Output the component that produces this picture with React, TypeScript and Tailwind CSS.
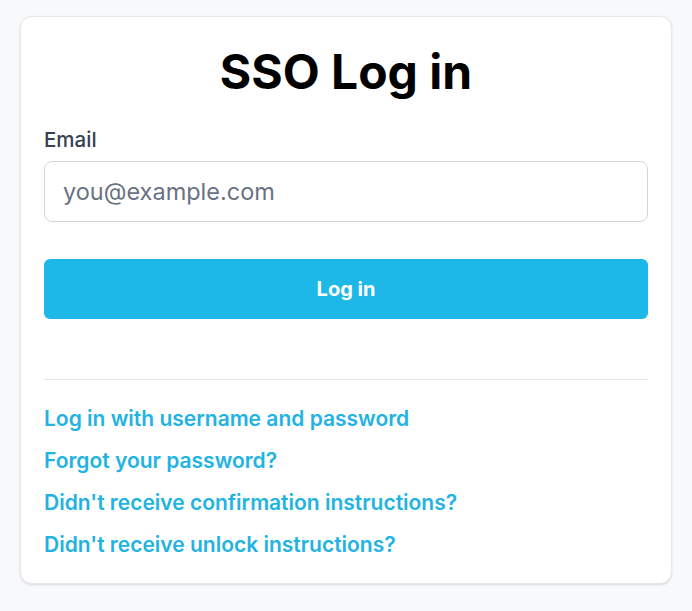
import React from 'react';

const links = [
  'Log in with username and password',
  'Forgot your password?',
  "Didn't receive confirmation instructions?",
  "Didn't receive unlock instructions?",
];

export default function App() {
  return (
    <div className="min-h-screen bg-[#f8f9fb] px-5 pt-4 pb-6 font-['Inter',sans-serif]">
      <div className="bg-white border border-gray-200 rounded-xl shadow-sm px-[23px] pt-[31px] pb-[24px]">
        <h1 className="text-center text-[48px] leading-[48px] font-bold text-black">SSO Log in</h1>

        <form className="mt-[30px]" onSubmit={(e) => e.preventDefault()}>
          <label htmlFor="email" className="block text-[20.5px] leading-[28px] font-medium text-gray-700">
            Email
          </label>
          <input
            id="email"
            type="email"
            placeholder="you@example.com"
            className="mt-[7px] block w-full h-[61px] px-[18px] rounded-lg border border-gray-300 text-[23.5px] text-gray-900 placeholder:text-gray-500 outline-none"
          />
          <button
            type="submit"
            className="mt-[37px] w-full h-[60px] rounded-md bg-[#1eb8e8] text-white text-[20px] font-bold"
          >
            Log in
          </button>
        </form>

        <div className="mt-[60px] border-t border-gray-200" />

        <div className="mt-[25px] flex flex-col gap-[14px]">
          {links.map((l) => (
            <a key={l} href="#" className="text-[21px] leading-[28px] font-semibold text-[#22b3e3]">
              {l}
            </a>
          ))}
        </div>
      </div>
    </div>
  );
}
